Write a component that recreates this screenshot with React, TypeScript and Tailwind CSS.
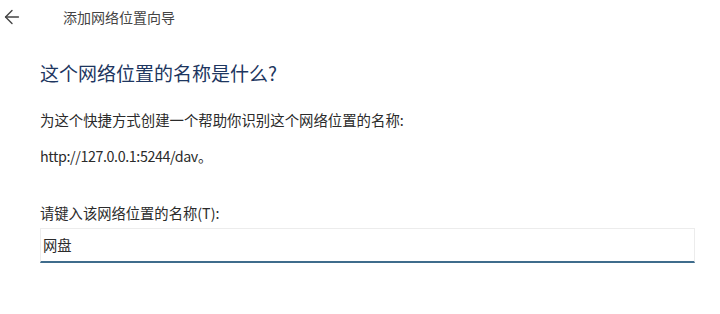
import { ArrowLeft } from "lucide-react";

const font = { fontFamily: '"Noto Sans CJK SC", sans-serif' };

export default function App() {
  return (
    <div className="h-[314px] w-[720px] bg-white text-[#2b2b2b]" style={font}>
      <div className="flex h-[34px] items-center">
        <div className="flex w-[63px] items-center pl-[1px]">
          <ArrowLeft size={22} strokeWidth={1.5} className="text-[#444]" />
        </div>
        <span className="text-[14px] text-[#444]">添加网络位置向导</span>
      </div>
      <div className="px-[40px]">
        <h1 className="mt-[26px] text-[19px] leading-[26px] text-[#1d3660]">这个网络位置的名称是什么?</h1>
        <p className="mt-[24px] text-[14.4px] leading-[20px]">为这个快捷方式创建一个帮助你识别这个网络位置的名称:</p>
        <p className="mt-[16px] text-[14.3px] leading-[20px] tracking-[-0.4px]">http://127.0.0.1:5244/dav。</p>
        <label className="mt-[37px] block text-[14.3px] leading-[20px]">请键入该网络位置的名称(T):</label>
        <div className="mt-[5px] flex h-[35px] w-[655px] items-center border border-b-2 border-[#ececec] border-b-[#3f6c8c] pl-[2px] text-[14.3px]">
          网盘
        </div>
      </div>
    </div>
  );
}
